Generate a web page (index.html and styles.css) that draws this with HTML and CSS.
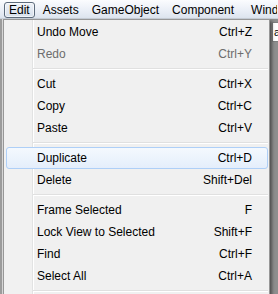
FILE: index.html
```html
<!DOCTYPE html>
<html lang="en">
<head>
    <meta charset="UTF-8">
    <title>Edit Menu</title>
    <link rel="stylesheet" href="styles.css">
</head>
<body>

    <!-- Menu Bar -->
    <div class="menubar">
        <span class="menu-title active">Edit</span>
        <span class="menu-title">Assets</span>
        <span class="menu-title">GameObject</span>
        <span class="menu-title">Component</span>
        <span class="menu-title last">Window</span>
    </div>

    <!-- Editor window behind the menu -->
    <div class="workspace">
        <div class="left-edge"></div>
        <div class="middle"></div>
        <div class="right-edge">
            <div class="field">a</div>
        </div>
    </div>

    <!-- Edit Dropdown -->
    <div class="dropdown">
        <div class="item"><span>Undo Move</span><span>Ctrl+Z</span></div>
        <div class="item disabled"><span>Redo</span><span>Ctrl+Y</span></div>
        <div class="separator"></div>
        <div class="item"><span>Cut</span><span>Ctrl+X</span></div>
        <div class="item"><span>Copy</span><span>Ctrl+C</span></div>
        <div class="item"><span>Paste</span><span>Ctrl+V</span></div>
        <div class="separator"></div>
        <div class="item hover"><span>Duplicate</span><span>Ctrl+D</span></div>
        <div class="item"><span>Delete</span><span>Shift+Del</span></div>
        <div class="separator"></div>
        <div class="item"><span>Frame Selected</span><span>F</span></div>
        <div class="item"><span>Lock View to Selected</span><span>Shift+F</span></div>
        <div class="item"><span>Find</span><span>Ctrl+F</span></div>
        <div class="item"><span>Select All</span><span>Ctrl+A</span></div>
        <div class="separator"></div>
    </div>

</body>
</html>
```

FILE: styles.css
```css
/* General */
body {
    margin: 0;
    width: 278px;
    height: 294px;
    overflow: hidden;
    position: relative;
    background: #a9a9a9;
    font-family: 'Liberation Sans', Arial, sans-serif;
    font-size: 12px;
    color: #000;
}

/* Menu Bar */
.menubar {
    height: 18px;
    line-height: 18px;
    display: flex;
    gap: 3px;
    padding-left: 4px;
    overflow: hidden;
    background: linear-gradient(#fbfcfe, #e9eef6 60%, #dde4ee);
    border-bottom: 1px solid #c9d0da;
    white-space: nowrap;
}

.menu-title {
    padding: 0 4px;
    border: 1px solid transparent;
    line-height: 14px;
    margin-top: 2px;
    height: 14px;
    border-radius: 3px;
    flex-shrink: 0;
}

.menu-title.last {
    margin-left: 4px;
    flex-shrink: 1;
    min-width: 0;
    overflow: hidden;
    padding-right: 0;
}

.menu-title.active {
    border-color: #5d6b7c;
    background: linear-gradient(#eef2f8, #d7e0ec);
    box-shadow: inset 0 0 0 1px rgba(255, 255, 255, 0.6);
}

/* Editor behind */
.workspace {
    display: flex;
    height: 275px;
}

.left-edge {
    width: 3px;
    background: linear-gradient(to right, #9c9c9c 2px, #dcdcdc 2px);
}

.middle {
    flex: 1;
}

.right-edge {
    width: 8px;
    background: #8e8e8e;
    overflow: hidden;
}

.field {
    margin: 3px 0 0 2px;
    height: 18px;
    background: #fff;
    border: 1px solid #7f7f7f;
    border-right: none;
    line-height: 18px;
    padding-left: 1px;
    font-size: 11px;
    overflow: hidden;
}

/* Dropdown */
.dropdown {
    position: absolute;
    left: 3px;
    top: 19px;
    width: 265px;
    height: 274px;
    overflow: hidden;
    padding-top: 1px;
    border: 1px solid #979797;
    border-bottom: none;
    background: linear-gradient(to right, #f1f1f1 28px, #e2e3e3 28px, #e2e3e3 29px, #fff 29px, #fff 30px, #f0f0f0 30px);
    box-shadow: 2px 2px 3px rgba(0, 0, 0, 0.45);
}

.item {
    display: flex;
    justify-content: space-between;
    height: 22px;
    line-height: 22px;
    margin: 0 1px 0 2px;
    padding: 0 16px 0 31px;
    white-space: nowrap;
}

.item.disabled {
    color: #6d6d6d;
}

.item.hover {
    height: 20px;
    line-height: 20px;
    padding: 0 15px 0 30px;
    border: 1px solid #aecff7;
    border-radius: 3px;
    background: linear-gradient(#f4f9fe, #e4eefb);
}

.separator {
    height: 8px;
    margin: 0 1px 0 29px;
    background: linear-gradient(transparent 3px, #e0e0e0 3px, #e0e0e0 4px, #fff 4px, #fff 5px, transparent 5px);
}
```
